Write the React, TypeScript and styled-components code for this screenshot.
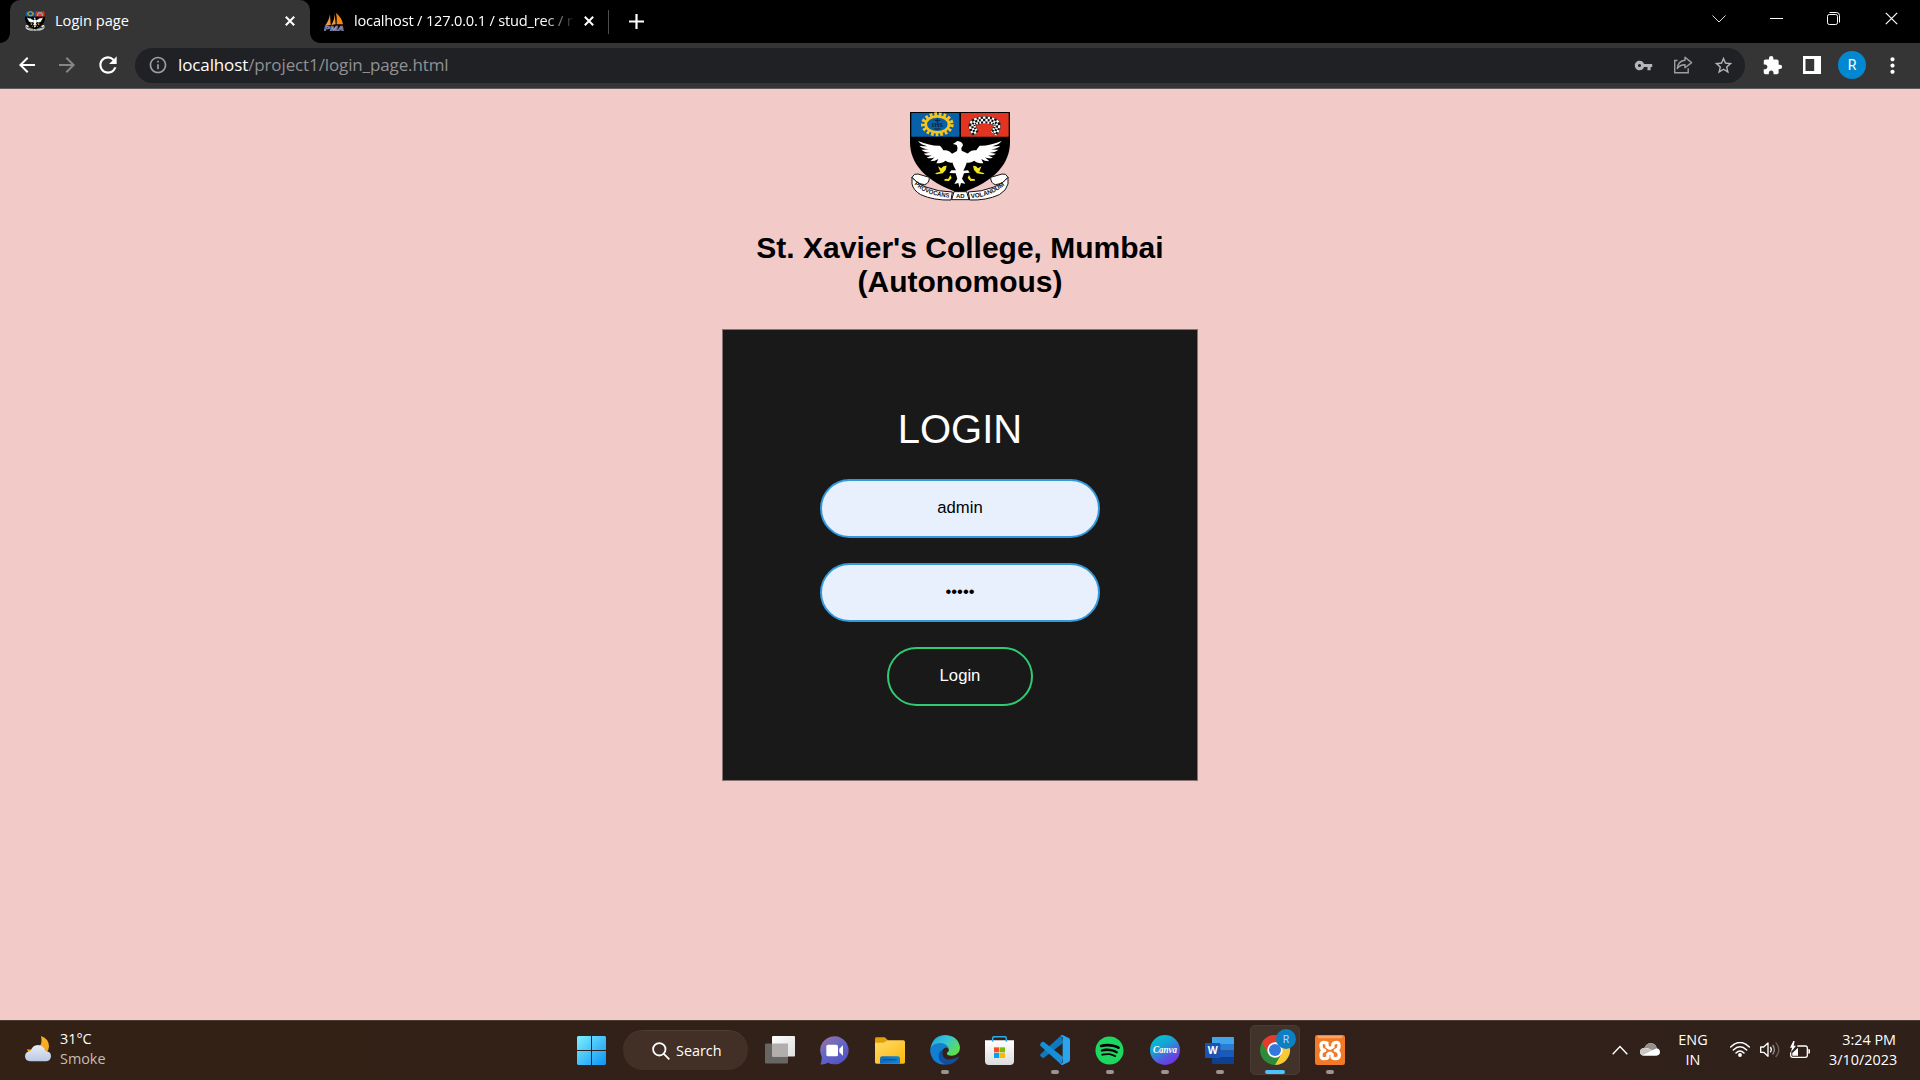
import React from 'react';
import styled, { createGlobalStyle } from 'styled-components';
import {
  MdArrowBack,
  MdArrowForward,
  MdRefresh,
  MdInfoOutline,
  MdVpnKey,
  MdStarBorder,
  MdExtension,
  MdMoreVert,
} from 'react-icons/md';
import { FaSpotify } from 'react-icons/fa';

const UI_FONT = `"Segoe UI", "Open Sans", "Noto Sans", sans-serif`;
const PAGE_FONT = `"Liberation Sans", Arial, sans-serif`;

const GlobalStyle = createGlobalStyle`
  *, *::before, *::after { box-sizing: border-box; }
  body { margin: 0; background: #000; overflow: hidden; }
  svg { display: block; flex: none; }
`;

const Screen = styled.div`
  display: flex;
  flex-direction: column;
  width: 1920px;
  height: 1080px;
  overflow: hidden;
`;

/* ---------- browser chrome ---------- */

const TabStrip = styled.div`
  display: flex;
  align-items: stretch;
  height: 43px;
  background: #000;
  color: #fff;
  font-family: ${UI_FONT};
`;

const TabFoot = styled.div<{ $side: 'left' | 'right' }>`
  width: 10px;
  flex: none;
  background: radial-gradient(
    circle at ${(p) => (p.$side === 'left' ? '0' : '100%')} 33px,
    #000 9.5px,
    #353535 10.2px
  );
  clip-path: inset(33px 0 0 0);
`;

const Tab = styled.div<{ $active?: boolean }>`
  display: flex;
  align-items: center;
  width: ${(p) => (p.$active ? 300 : 288)}px;
  padding: 0 ${(p) => (p.$active ? 15 : 14)}px 1px ${(p) => (p.$active ? 15 : 4)}px;
  background: ${(p) => (p.$active ? '#353535' : 'transparent')};
  border-radius: 10px 10px 0 0;
`;

const TabTitle = styled.span<{ $faded?: boolean }>`
  flex: 1;
  margin: 0 ${(p) => (p.$faded ? 8 : 12)}px 0 10px;
  padding-bottom: 2px;
  white-space: nowrap;
  font-size: 14.6px;
  line-height: 20px;
  letter-spacing: ${(p) => (p.$faded ? '-0.18px' : '0')};
  ${(p) =>
    p.$faded &&
    'overflow: hidden; mask-image: linear-gradient(90deg, #000 calc(100% - 32px), transparent 100%);'}
`;

const TabDivider = styled.div`
  width: 1px;
  height: 24px;
  margin: 10px 20px 0 0;
  background: #4b4b4b;
`;

const NewTab = styled.div`
  display: flex;
  align-items: center;
  padding-bottom: 1px;
`;

const WindowControls = styled.div`
  display: grid;
  grid-template-columns: repeat(4, 57.4px);
  justify-items: center;
  align-items: center;
  height: 37px;
  margin-left: auto;
`;

const Toolbar = styled.div`
  display: flex;
  align-items: center;
  height: 46px;
  padding: 0 8px 1px 15px;
  background: #353535;
  border-bottom: 1px solid #5d5d5d;
  color: #fff;
`;

const ToolButton = styled.div<{ $w?: number; $dim?: boolean }>`
  display: flex;
  justify-content: center;
  width: ${(p) => p.$w ?? 40}px;
  color: ${(p) => (p.$dim ? '#868686' : '#fff')};
`;

const Omnibox = styled.div`
  display: flex;
  align-items: center;
  flex: 1;
  height: 35px;
  margin: 0 7px 0 14px;
  padding: 0 2px 0 13px;
  border-radius: 18px;
  background: #202124;
  color: #9aa0a6;
`;

const Url = styled.div`
  flex: 1;
  padding-left: 10px;
  color: #8f9195;
  font-family: ${UI_FONT};
  font-size: 17px;
  line-height: 24px;
  letter-spacing: -0.12px;
  b { color: #fff; font-weight: 400; }
`;

const Avatar = styled.div`
  display: grid;
  place-items: center;
  width: 28px;
  height: 28px;
  margin: 0 7px 0 6px;
  border-radius: 50%;
  background: #0288d1;
  color: #fff;
  font: 400 14px Roboto, sans-serif;
`;

/* ---------- web page ---------- */

const Page = styled.main`
  display: flex;
  flex-direction: column;
  align-items: center;
  flex: 1;
  padding-top: 23px;
  background: #f2cbc9;
  font-family: ${PAGE_FONT};
`;

const Heading = styled.h2`
  margin: 30px 0 30px;
  color: #000;
  text-align: center;
  font-size: 30px;
  line-height: 34px;
`;

const LoginBox = styled.form`
  display: flex;
  flex-direction: column;
  align-items: center;
  width: 476px;
  height: 452px;
  padding-top: 76px;
  border: 1px solid #857271;
  background: #191919;
`;

const LoginTitle = styled.h1`
  margin: 0 0 27px;
  color: #fff;
  font-size: 40px;
  font-weight: 400;
  line-height: 46px;
`;

const Field = styled.input`
  width: 280px;
  height: 59px;
  margin-bottom: 25px;
  padding: 0 12px 1px;
  border: 2px solid #3498db;
  border-radius: 30px;
  outline: 0;
  background: #e8f0fe;
  color: #000;
  text-align: center;
  font: 16.67px ${PAGE_FONT};
`;

const Submit = styled.button`
  width: 146px;
  height: 59px;
  padding: 0 0 1px;
  border: 2px solid #2ecc71;
  border-radius: 30px;
  background: transparent;
  color: #fff;
  font: 16.67px ${PAGE_FONT};
`;

/* ---------- taskbar ---------- */

const Taskbar = styled.footer`
  display: grid;
  grid-template-columns: 567px auto 1fr;
  height: 60px;
  border-top: 1px solid #4a3d33;
  background: linear-gradient(90deg, #342115, #32211a 50%, #2f2019);
  color: #fff;
  font-family: ${UI_FONT};
  font-size: 14.4px;
  line-height: 20px;
`;

const Weather = styled.div`
  display: flex;
  align-items: center;
  gap: 9px;
  padding: 0 0 3px 25px;
  span { color: #c4bdb8; }
`;

const Apps = styled.div`
  display: flex;
  align-items: center;
  gap: 5px;
  padding-bottom: 1px;
`;

const AppCell = styled.div<{ $active?: boolean }>`
  display: grid;
  grid-template-rows: 44px 4px;
  justify-items: center;
  align-items: center;
  width: 50px;
  height: 50px;
  border: 1px solid ${(p) => (p.$active ? '#4a3c34' : 'transparent')};
  border-radius: 5px;
  background: ${(p) => (p.$active ? '#41332a' : 'transparent')};
  svg { margin-top: 4px; }
  svg[width='29'] { margin-right: 1px; }
`;

const Indicator = styled.i<{ $state: 'none' | 'open' | 'active' }>`
  width: ${(p) => (p.$state === 'active' ? 20 : 8)}px;
  height: 4px;
  border-radius: 2px;
  background: ${(p) =>
    p.$state === 'none' ? 'transparent' : p.$state === 'active' ? '#4cc2ff' : '#9c9490'};
`;

const SearchPill = styled.div`
  display: flex;
  align-items: center;
  gap: 6px;
  width: 125px;
  height: 40px;
  margin: 0 2px 0 1px;
  padding: 0 0 0 29px;
  border-radius: 20px;
  border-top: 1px solid #4d3d33;
  background: #422f25;
`;

const Tray = styled.div`
  display: flex;
  align-items: center;
  justify-content: flex-end;
  padding: 0 24px 2px 0;
`;

const TrayIcons = styled.div<{ $gap: number; $right: number }>`
  display: flex;
  align-items: center;
  gap: ${(p) => p.$gap}px;
  margin-right: ${(p) => p.$right}px;
`;

const TrayText = styled.div<{ $align: 'center' | 'right'; $w: number; $right?: number }>`
  width: ${(p) => p.$w}px;
  margin-right: ${(p) => p.$right ?? 0}px;
  padding-top: ${(p) => (p.$align === 'center' ? 1 : 0)}px;
  text-align: ${(p) => p.$align};
  white-space: nowrap;
`;

/* ---------- drawings ---------- */

const WING =
  'M187 162 Q176 148 160 151 Q155 142 150 137 Q125 139 84 123 Q92 134 112 139 Q100 139 88 137 Q98 147 116 148 Q104 150 94 149 Q104 158 120 158 L101 161 Q110 169 126 166 L110 173 Q124 177 134 172 L121 184 Q136 184 145 177 L139 190 Q158 190 166 182 Q178 190 188 188 Z';

const ARCH = 'M257 101Q228 60 284 60Q340 60 311 101';

const Crest = ({ width, height }: { width: number; height: number }) => (
  <svg width={width} height={height} viewBox="60 36 300 267" preserveAspectRatio="none">
    <path d="M60 36h300v90c0 62-42 118-150 154C102 244 60 188 60 126z" fill="#000" />
    <path d="M64 39h144v71H64z" fill="#0860a8" />
    <path d="M213 39h143v71H213z" fill="#e23420" />
    <g fill="none" stroke="#f8c51c">
      <ellipse cx="142" cy="73" rx="35" ry="24" strokeWidth="8" />
      <ellipse cx="142" cy="73" rx="43" ry="30" strokeWidth="12" strokeDasharray="8 5.6" />
      <path d="M142 55v14M134 61h17M133 87h18" stroke="#10202e" strokeWidth="3" />
    </g>
    <text x="142" y="80" fontSize="20" fontWeight="700" fontFamily="Liberation Serif" textAnchor="middle" fill="#10202e">
      IHS
    </text>
    <g fill="none">
      <path d={ARCH} stroke="#111" strokeWidth="23" />
      <path d={ARCH} stroke="#fff" strokeWidth="21" />
      <path d={ARCH} stroke="#111" strokeWidth="21" strokeDasharray="6 6" />
      <path d={ARCH} stroke="#fff" strokeWidth="7" />
      <path d={ARCH} stroke="#111" strokeWidth="7" strokeDasharray="6 6" strokeDashoffset="6" />
    </g>
    <g fill="#fff">
      <path d={WING} />
      <path d={WING} transform="translate(419 0) scale(-1 1)" />
      <path d="M189 132 202 123Q217 124 219 136Q212 143 215 152L236 162 231 186Q225 204 220 212L234 211 239 218 222 220 216 236 226 251 213 249 209 263 205 249 193 252 202 236 197 220 178 219 184 211 198 211Q190 199 187 187L181 164 201 153Q205 144 200 135z" />
    </g>
    <g fill="#f3e51d">
      <path d="M144 199l10 6 6-6 10-2-3 13-9 10-18 3-5-3 16-5z" />
      <path d="M274 199l-10 6-6-6-9-2 3 13 9 10 18 3 5-3-16-5z" />
      <path d="M181 225l4 9-8 9-14-1 1-5 11-1zM237 225l-4 9 8 9 14-1-1-5-11-1z" />
    </g>
    <g fill="#fff" stroke="#111" strokeWidth="3" strokeLinejoin="round">
      <path d="M66 232Q72 219 84 222L118 232Q118 250 104 254L84 250z" />
      <path d="M354 232Q348 219 336 222L302 232Q302 250 316 254L336 250z" />
      <path d="M66 232Q80 250 108 261Q146 276 187 276L183 300Q132 302 92 284Q70 271 66 252z" />
      <path d="M354 232Q340 250 312 261Q274 276 235 276L239 300Q288 302 328 284Q350 271 354 252z" />
      <path d="M192 275h38l7 24h-52z" />
    </g>
    <path id="ribbonLeft" d="M73 253Q104 286 183 294" fill="none" />
    <path id="ribbonRight" d="M243 295Q308 289 348 252" fill="none" />
    <g fontFamily="Liberation Sans" fontWeight="700" fontSize="19" fill="#111">
      <text>
        <textPath href="#ribbonLeft" textLength="114" lengthAdjust="spacingAndGlyphs">PROVOCANS</textPath>
      </text>
      <text>
        <textPath href="#ribbonRight" textLength="110" lengthAdjust="spacingAndGlyphs">VOLANDUM</textPath>
      </text>
      <text x="211" y="295" fontSize="18" textAnchor="middle">AD</text>
    </g>
  </svg>
);

const PmaIcon = () => (
  <svg width="20" height="20" viewBox="0 0 60 60">
    <path d="M3 44Q15 30 18 10L20 42zM22 42Q34 24 31 1L35 40z" fill="#f29b38" />
    <path d="M38 40Q40 22 36 6Q54 20 57 40z" fill="#f58a12" />
    <text x="0" y="59" textLength="60" lengthAdjust="spacingAndGlyphs" fontSize="24" fontWeight="700" fontStyle="italic" fontFamily="Liberation Sans" fill="#3d3d66" stroke="#a5a5c8" strokeWidth="1.6">
      PMA
    </text>
  </svg>
);

const Cross = ({ size, stroke }: { size: number; stroke: number }) => (
  <svg width={size} height={size} viewBox={`0 0 ${size} ${size}`}>
    <path d={`M.8.8 ${size - 0.8} ${size - 0.8}M${size - 0.8}.8.8 ${size - 0.8}`} stroke="#fff" strokeWidth={stroke} />
  </svg>
);

const PlusIcon = () => (
  <svg width="15" height="15" viewBox="0 0 15 15">
    <path d="M7.5 0v15M0 7.5h15" stroke="#fff" strokeWidth="2.2" />
  </svg>
);

const ChevronDown = () => (
  <svg width="14" height="8" viewBox="0 0 14 8">
    <path d="M.5.5 7 7 13.5.5" fill="none" stroke="#ddd" strokeWidth="1" />
  </svg>
);

const Minimize = () => (
  <svg width="13" height="1" viewBox="0 0 13 1">
    <path d="M0 .5h13" stroke="#fff" strokeWidth="1" />
  </svg>
);

const Restore = () => (
  <svg width="13" height="13" viewBox="0 0 13 13">
    <rect x=".5" y="2.5" width="10" height="10" rx="1.8" fill="none" stroke="#fff" strokeWidth="1" />
    <path d="M2.5.5h7a3 3 0 0 1 3 3v7" fill="none" stroke="#fff" strokeWidth="1" />
  </svg>
);

const ShareIcon = () => (
  <svg width="20" height="20" viewBox="0 0 20 20" fill="none" stroke="#9d9ea0" strokeWidth="1.4">
    <path d="M4.5 5.5H1.7v12.3h13.5v-4.6" />
    <path d="M12 2.2 18.6 7.6 12 12.8V9.8Q7 9.6 4.3 13.6 5 5.8 12 5.2z" strokeLinejoin="round" />
  </svg>
);

const SidePanel = () => (
  <svg width="18" height="18" viewBox="0 0 18 18">
    <path d="M0 0h18v18H0z" fill="#fff" />
    <path d="M2.5 3h8.7v12H2.5z" fill="#353535" />
  </svg>
);

const WeatherIcon = () => (
  <svg width="26" height="26" viewBox="0 0 78 78">
    <defs>
      <linearGradient id="moon" x2="0" y2="1">
        <stop stopColor="#f8b62a" />
        <stop offset="1" stopColor="#f0a020" />
      </linearGradient>
      <linearGradient id="cloud" x2="0" y2="1">
        <stop stopColor="#e9edf6" />
        <stop offset="1" stopColor="#b9c8e2" />
      </linearGradient>
    </defs>
    <path d="M48 0Q72 8 72 32Q71 54 40 60Q16 60 5 40Q58 46 48 0z" fill="url(#moon)" />
    <path d="M15 76Q0 75 0 60Q1 46 17 45Q22 27 39 27Q56 28 61 45Q78 46 78 61Q77 76 62 76z" fill="url(#cloud)" />
  </svg>
);

const StartIcon = () => (
  <svg width="29" height="29" viewBox="0 0 29 29">
    <defs>
      <linearGradient id="start" gradientUnits="userSpaceOnUse" x1="0" y1="0" x2="29" y2="29">
        <stop stopColor="#7df0ff" />
        <stop offset="1" stopColor="#0c93f5" />
      </linearGradient>
    </defs>
    <path d="M1 0h13v14H0V1zM15 0h13l1 1v13H15zM0 15h14v14H1l-1-1zM15 15h14v13l-1 1H15z" fill="url(#start)" />
  </svg>
);

const SearchIcon = () => (
  <svg width="18" height="18" viewBox="0 0 18 18" fill="none" stroke="#fff" strokeWidth="1.8">
    <circle cx="7.3" cy="7.3" r="6.2" />
    <path d="m11.8 11.8 5.5 5.5" />
  </svg>
);

const TaskViewIcon = () => (
  <svg width="30" height="28" viewBox="0 0 30 28">
    <defs>
      <linearGradient id="tvFront" x2="1" y2="1">
        <stop stopColor="#fff" />
        <stop offset="1" stopColor="#dedede" />
      </linearGradient>
    </defs>
    <rect y="7.5" width="23" height="20" rx="1" fill="#686663" />
    <rect x="7" width="23" height="20.5" rx="1" fill="url(#tvFront)" />
    <path d="M7 7.5h16v13H7z" fill="#b1afad" />
  </svg>
);

const ChatIcon = () => (
  <svg width="29" height="29" viewBox="0 0 87 87">
    <defs>
      <linearGradient id="chat" x2=".7" y2="1">
        <stop stopColor="#a0749f" />
        <stop offset=".55" stopColor="#6166c6" />
        <stop offset="1" stopColor="#5552c4" />
      </linearGradient>
    </defs>
    <path d="M44 1A42 42 0 1 1 24 80Q15 86 1 85Q6 77 5 62A42 42 0 0 1 44 1z" fill="url(#chat)" />
    <rect x="19" y="26" width="35" height="35" rx="5" fill="#fff" />
    <path d="M58 38 69 28v31L58 49z" fill="#fff" />
  </svg>
);

const FolderIcon = () => (
  <svg width="30" height="27" viewBox="0 0 90 81">
    <defs>
      <linearGradient id="folder" x2=".8" y2="1">
        <stop stopColor="#ffdc69" />
        <stop offset="1" stopColor="#fcb912" />
      </linearGradient>
      <linearGradient id="folderTab" x2="1" y2="0">
        <stop stopColor="#0f6cbd" />
        <stop offset="1" stopColor="#1184d8" />
      </linearGradient>
    </defs>
    <path d="M0 5Q0 1 5 1h24l10 9-8 14H0z" fill="#e2a007" />
    <path d="M0 17h26l12-7h47q5 0 5 5v61q0 4-5 4H5q-5 0-5-4z" fill="url(#folder)" />
    <path d="M15 80V65q0-7 7-7h46q7 0 7 7v15z" fill="url(#folderTab)" />
    <path d="M25 68h40" stroke="#0c4f8f" strokeWidth="4" />
  </svg>
);

const EdgeIcon = () => (
  <svg width="30" height="30" viewBox="0 0 90 90">
    <defs>
      <linearGradient id="edgeTop" x2="1" y2=".6">
        <stop stopColor="#1d9fdc" />
        <stop offset=".5" stopColor="#35c5d8" />
        <stop offset="1" stopColor="#5fdf4d" />
      </linearGradient>
      <linearGradient id="edgeBody" x2=".4" y2="1">
        <stop stopColor="#1580c8" />
        <stop offset="1" stopColor="#0f7ddc" />
      </linearGradient>
    </defs>
    <path d="M1 42Q8 0 47 0Q86 3 90 38Q89 60 66 62Q48 62 51 53Q58 50 56 42Q50 29 35 28Q12 26 1 42z" fill="url(#edgeTop)" />
    <path d="M0 46Q4 24 33 24Q51 26 56 40Q46 34 38 44Q26 68 48 88Q6 92 0 46z" fill="url(#edgeBody)" />
    <path d="M38 44Q32 76 63 73Q75 72 84 65Q88 64 86 68Q71 90 48 89Q24 84 26 60Q28 48 38 44z" fill="#124f9e" />
  </svg>
);

const StoreIcon = () => (
  <svg width="29" height="29" viewBox="0 0 87 87">
    <defs>
      <linearGradient id="bag" x2="0" y2="1">
        <stop stopColor="#fff" />
        <stop offset="1" stopColor="#dcdcdc" />
      </linearGradient>
    </defs>
    <path d="M0 13h87v62q0 12-12 12H12Q0 87 0 75z" fill="url(#bag)" />
    <path d="M23 17V7q0-5 5-5h31q5 0 5 5v10" fill="none" stroke="#28afea" strokeWidth="4.5" />
    <path d="M27 34h16v15H27z" fill="#f25022" />
    <path d="M45 34h15v15H45z" fill="#7fba00" />
    <path d="M27 51h16v15H27z" fill="#00a4ef" />
    <path d="M45 51h15v15H45z" fill="#ffb900" />
  </svg>
);

const CodeIcon = () => (
  <svg width="30" height="30" viewBox="0 0 90 90">
    <path d="M1 58 64 1 69 24 12 68Q8 70 5 67L1 63Q0 60 1 58z" fill="#0f78be" />
    <path d="M1 32 64 89 69 66 12 21Q8 19 5 22L1 26Q0 29 1 32z" fill="#168ed8" />
    <path d="M62 2Q65-1 69 1L86 9Q90 11 90 15V75Q90 79 86 81L69 89Q65 91 62 88L68 83V7z" fill="#2ba4ef" />
  </svg>
);

const SpotifyIcon = styled(FaSpotify).attrs({ size: 29, color: '#1ed760' })`
  background: radial-gradient(#000 60%, transparent 61%);
`;

const CanvaIcon = () => (
  <svg width="30" height="30" viewBox="0 0 30 30">
    <defs>
      <linearGradient id="canva" x1=".15" y1="0" x2=".75" y2="1">
        <stop stopColor="#02c4cc" />
        <stop offset=".4" stopColor="#1aa0d4" />
        <stop offset=".75" stopColor="#5a50e0" />
        <stop offset="1" stopColor="#7b2be8" />
      </linearGradient>
    </defs>
    <circle cx="15" cy="15" r="15" fill="url(#canva)" />
    <text x="15" y="17.5" textAnchor="middle" textLength="24" lengthAdjust="spacingAndGlyphs" fontSize="9.5" fontStyle="italic" fontWeight="700" fontFamily="Liberation Serif" fill="#fff">
      Canva
    </text>
  </svg>
);

const WordIcon = () => (
  <svg width="29" height="27" viewBox="0 0 87 81">
    <path d="M21 0h64q2 0 2 2v19H21z" fill="#41a5ee" />
    <path d="M21 21h66v20H21z" fill="#2b7cd3" />
    <path d="M21 41h66v20H21z" fill="#185abd" />
    <path d="M21 61h66v18q0 2-2 2H23q-2 0-2-2z" fill="#103f91" />
    <rect y="18" width="46" height="45" rx="3" fill="#1b54b0" />
    <text x="23" y="51" textAnchor="middle" fontSize="31" fontWeight="700" fontFamily="Open Sans" fill="#fff">
      W
    </text>
  </svg>
);

const ChromeIcon = () => (
  <svg width="42" height="42" viewBox="-18 0 126 126">
    <circle cx="45" cy="63" r="45" fill="#2b8c3a" />
    <path d="M25.500 74.500 6 40.500A45 45 0 0 1 84 40.500H45z" fill="#e33b2e" />
    <path d="M45 40.500H84A45 45 0 0 1 45 108L64.500 74.500z" fill="#fcc934" />
    <circle cx="45" cy="63" r="23" fill="#fff" />
    <circle cx="45" cy="63" r="18" fill="#3577e0" />
    <circle cx="78" cy="30" r="30" fill="#0b80c4" />
    <text x="78" y="41" textAnchor="middle" fontSize="31" fontFamily="Roboto" fill="#b5dcf5">
      R
    </text>
  </svg>
);

const XamppIcon = () => (
  <svg width="30" height="30" viewBox="0 0 90 90">
    <rect width="90" height="90" rx="7" fill="#f27a26" />
    <path d="M8 2h74q2 8-8 8H16Q6 10 8 2z" fill="#ffb27c" opacity=".75" />
    <g fill="none" stroke="#fff" strokeWidth="10" strokeLinejoin="round" strokeLinecap="round">
      <path d="M36 24Q17 18 18 32Q18 44 29 46Q17 48 18 62Q18 72 30 71Q43 70 38 59Q45 50 52 59Q47 70 60 71Q74 72 73 58Q72 48 61 46Q73 44 72 32Q72 19 60 23Q51 26 54 35Q45 44 36 35Q38 26 30 23" />
    </g>
  </svg>
);

const ChevronUp = () => (
  <svg width="16" height="10" viewBox="0 0 16 10">
    <path d="m.7 9.2 7.3-7.7 7.3 7.7" fill="none" stroke="#fff" strokeWidth="1.4" />
  </svg>
);

const OneDrive = () => (
  <svg width="20" height="13" viewBox="0 0 60 39">
    <path d="M12 38Q0 37 0 26Q1 15 13 15Q19 0 34 1Q48 3 50 16Q60 18 60 28Q59 38 49 38z" fill="#fff" />
    <path d="M13 15Q19 0 34 1Q48 3 50 16L37 22 23 15z" fill="#94908d" />
    <path d="M0 26Q1 15 13 15Q20 14 37 22L8 37Q0 34 0 26z" fill="#c9c6c4" />
  </svg>
);

const Wifi = () => (
  <svg width="20" height="15" viewBox="0 0 60 45" fill="none" stroke="#fff" strokeWidth="4.5" strokeLinecap="round">
    <path d="M2 15Q30-12 58 15M10 24Q30 5 50 24M18 33Q30 21 42 33" />
    <circle cx="30" cy="39" r="3.5" fill="#fff" />
  </svg>
);

const Speaker = () => (
  <svg width="20" height="17" viewBox="0 0 60 51" fill="none" stroke="#fff" strokeWidth="4" strokeLinejoin="round">
    <path d="M2 18h9L24 6v40L11 34H2z" />
    <path d="M31 18Q37 26 31 34" />
    <path d="M38 12Q48 26 38 40" stroke="#9c9490" />
    <path d="M47 4Q66 26 47 48" stroke="#6b605a" />
  </svg>
);

const Battery = () => (
  <svg width="20" height="18" viewBox="0 0 60 54">
    <path d="M22 15h24q6 0 6 6v22q0 6-6 6H8q-6 0-6-6V34" fill="none" stroke="#fff" strokeWidth="3.8" />
    <path d="M55 24q5 0 5 3v8q0 3-5 3z" fill="#fff" />
    <path d="M7 36 24 20V44H7zM10 0 0 20h6L3 34 18 14h-7L14 0z" fill="#fff" />
  </svg>
);

/* ---------- data ---------- */

type State = 'none' | 'open' | 'active';

const APPS: { name: string; icon: React.ReactNode; state: State }[] = [
  { name: 'taskview', icon: <TaskViewIcon />, state: 'none' },
  { name: 'chat', icon: <ChatIcon />, state: 'none' },
  { name: 'explorer', icon: <FolderIcon />, state: 'none' },
  { name: 'edge', icon: <EdgeIcon />, state: 'open' },
  { name: 'store', icon: <StoreIcon />, state: 'none' },
  { name: 'code', icon: <CodeIcon />, state: 'open' },
  { name: 'spotify', icon: <SpotifyIcon />, state: 'open' },
  { name: 'canva', icon: <CanvaIcon />, state: 'open' },
  { name: 'word', icon: <WordIcon />, state: 'open' },
  { name: 'chrome', icon: <ChromeIcon />, state: 'active' },
  { name: 'xampp', icon: <XamppIcon />, state: 'open' },
];

const TaskApp = ({ icon, state }: { icon: React.ReactNode; state: State }) => (
  <AppCell $active={state === 'active'}>
    {icon}
    <Indicator $state={state} />
  </AppCell>
);

export default function App() {
  return (
    <Screen>
      <GlobalStyle />
      <TabStrip>
        <TabFoot $side="left" />
        <Tab $active>
          <Crest width={20} height={20} />
          <TabTitle>Login page</TabTitle>
          <Cross size={10} stroke={2} />
        </Tab>
        <TabFoot $side="right" />
        <Tab>
          <PmaIcon />
          <TabTitle $faded>localhost / 127.0.0.1 / stud_rec / r</TabTitle>
          <Cross size={10} stroke={2} />
        </Tab>
        <TabDivider />
        <NewTab>
          <PlusIcon />
        </NewTab>
        <WindowControls>
          <ChevronDown />
          <Minimize />
          <Restore />
          <Cross size={13} stroke={1.2} />
        </WindowControls>
      </TabStrip>
      <Toolbar>
        <ToolButton $w={24}><MdArrowBack size={24} /></ToolButton>
        <ToolButton $w={56} $dim><MdArrowForward size={24} /></ToolButton>
        <ToolButton $w={26}><MdRefresh size={26} /></ToolButton>
        <Omnibox>
          <MdInfoOutline size={20} />
          <Url><b>localhost</b>/project1/login_page.html</Url>
          <ToolButton $dim><MdVpnKey size={19} color="#b4b5b7" /></ToolButton>
          <ToolButton $dim><ShareIcon /></ToolButton>
          <ToolButton $dim><MdStarBorder size={21} color="#b4b5b7" /></ToolButton>
        </Omnibox>
        <ToolButton><MdExtension size={21} /></ToolButton>
        <ToolButton><SidePanel /></ToolButton>
        <Avatar>R</Avatar>
        <ToolButton $w={39}><MdMoreVert size={25} /></ToolButton>
      </Toolbar>
      <Page>
        <Crest width={100} height={89} />
        <Heading>
          St. Xavier's College, Mumbai
          <br />
          (Autonomous)
        </Heading>
        <LoginBox>
          <LoginTitle>LOGIN</LoginTitle>
          <Field type="text" defaultValue="admin" />
          <Field type="password" defaultValue="admin" />
          <Submit type="button">Login</Submit>
        </LoginBox>
      </Page>
      <Taskbar>
        <Weather>
          <WeatherIcon />
          <div>
            31°C
            <br />
            <span>Smoke</span>
          </div>
        </Weather>
        <Apps>
          <TaskApp icon={<StartIcon />} state="none" />
          <SearchPill>
            <SearchIcon />
            Search
          </SearchPill>
          {APPS.map((app) => (
            <TaskApp key={app.name} icon={app.icon} state={app.state} />
          ))}
        </Apps>
        <Tray>
          <TrayIcons $gap={12} $right={17}>
            <ChevronUp />
            <OneDrive />
          </TrayIcons>
          <TrayText $align="center" $w={32} $right={21}>
            ENG
            <br />
            IN
          </TrayText>
          <TrayIcons $gap={10} $right={19}>
            <Wifi />
            <Speaker />
            <Battery />
          </TrayIcons>
          <TrayText $align="right" $w={67}>
            3:24 PM
            <br />
            3/10/2023
          </TrayText>
        </Tray>
      </Taskbar>
    </Screen>
  );
}
